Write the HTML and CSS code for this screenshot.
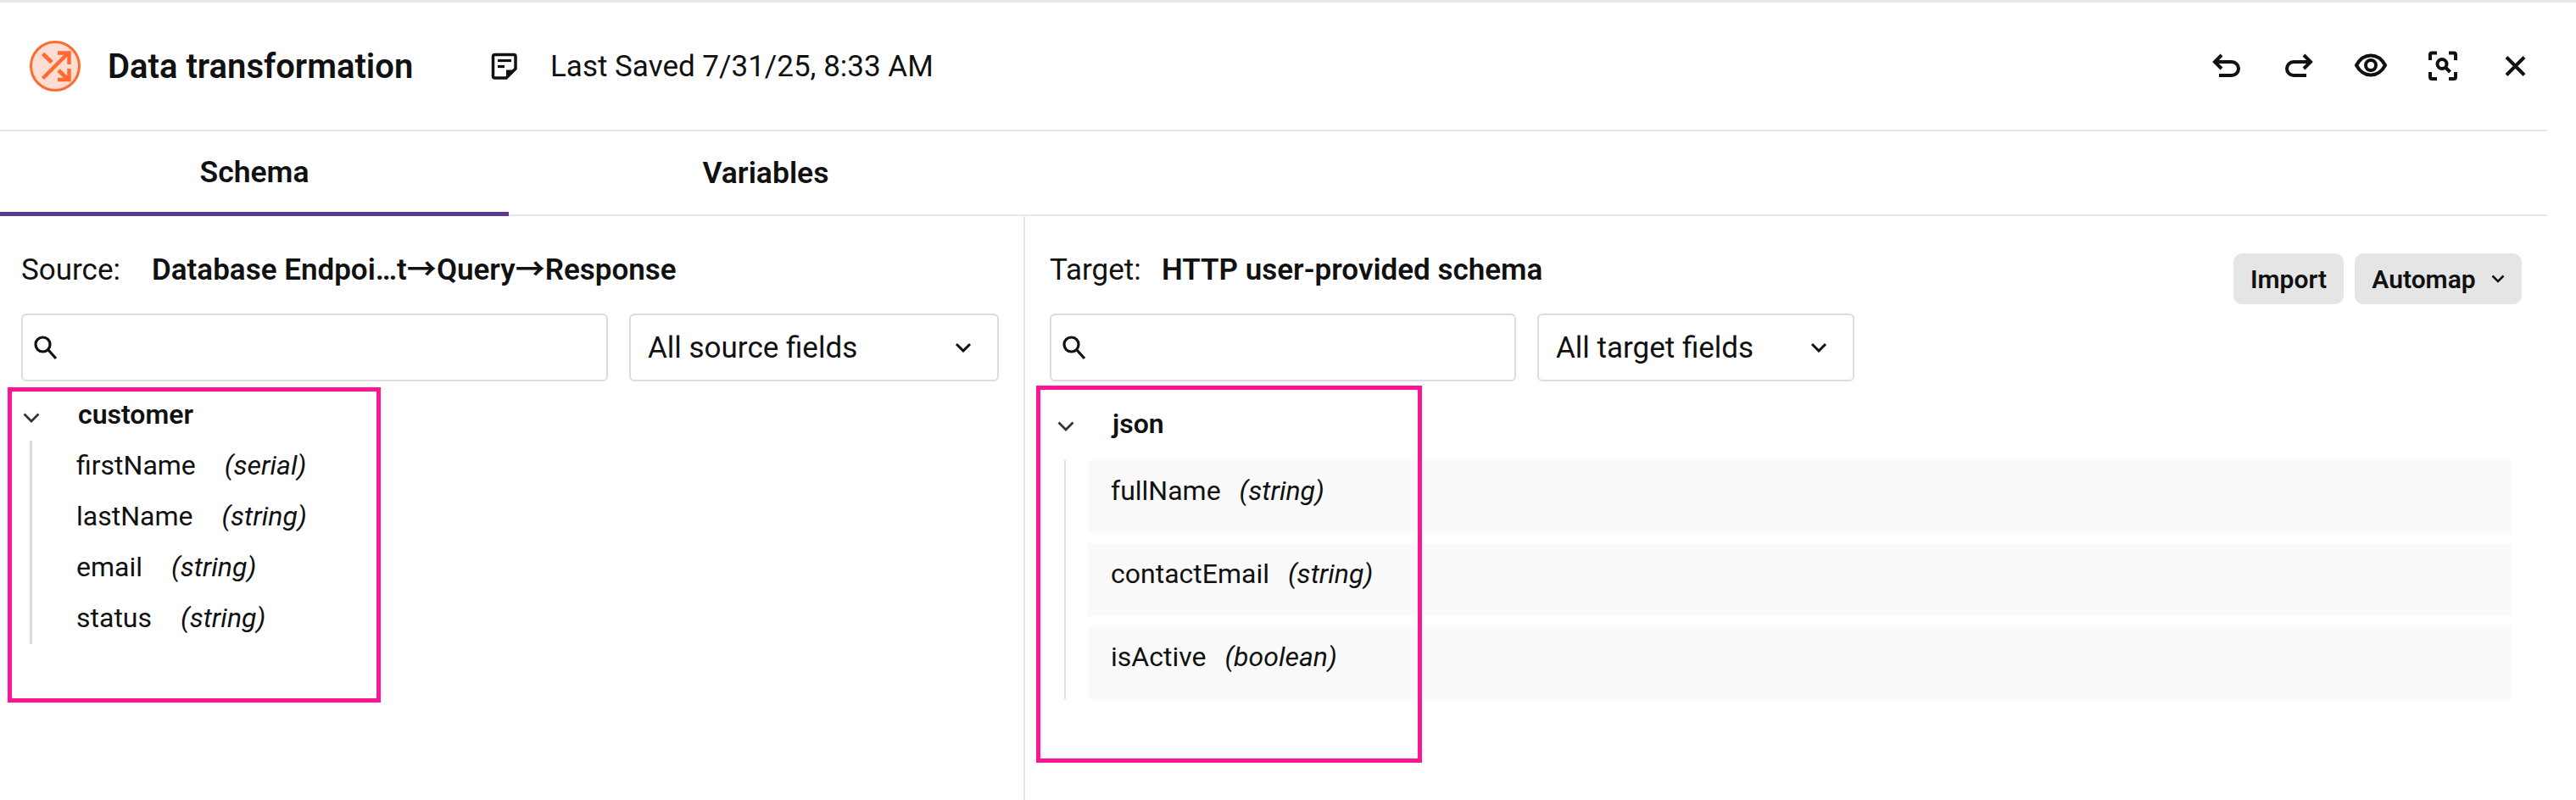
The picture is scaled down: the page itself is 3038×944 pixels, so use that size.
FILE: index.html
```html
<!DOCTYPE html>
<html lang="en">
<head>
<meta charset="utf-8">
<title>Data transformation</title>
<link rel="stylesheet" href="styles.css">
</head>
<body>
<div class="topline"></div>
<div class="app">
  <header class="header">
    <svg class="logo" width="60" height="60" viewBox="0 0 60 60">
      <circle cx="30" cy="30" r="28.5" fill="#ffddd2" stroke="#ff6a2e" stroke-width="3"/>
      <g fill="none" stroke="#ff6a2e" stroke-width="4.5">
        <path d="M15.5 15.5 26 25.5"/>
        <path d="M15.5 44.5 45 15"/>
        <path d="M34 35 45 45.5"/>
        <path d="M33 14.5H46.5V28"/>
        <path d="M33 46H46.5V33"/>
      </g>
    </svg>
    <h1 class="title">Data transformation</h1>
    <svg class="note" width="32" height="32" viewBox="0 0 32 32">
      <path d="M4.5 2.5H27a2 2 0 0 1 2 2V19L18 30H4.5a2 2 0 0 1-2-2V4.5a2 2 0 0 1 2-2Z" fill="none" stroke="#111" stroke-width="3.5"/>
      <path d="M8 9.5H24" stroke="#111" stroke-width="3.2"/>
      <path d="M8 16.5H16" stroke="#111" stroke-width="3.2"/>
      <path d="M18 20.5H30L18 31Z" fill="#111"/>
    </svg>
    <span class="saved">Last Saved 7/31/25, 8:33 AM</span>
    <div class="toolbar">
      <svg class="tool" viewBox="0 0 48 48"><path d="M10 18H30a8 8 0 0 1 0 16H15M18 10l-8 8 8 8"/></svg>
      <svg class="tool" viewBox="0 0 48 48"><path d="M38 18H18a8 8 0 0 0 0 16H33M30 10l8 8-8 8"/></svg>
      <svg class="tool" viewBox="0 0 48 48"><path d="M7 22C11 14.500 17 10.500 24 10.500S37 14.500 41 22C37 29.500 31 33.500 24 33.500S11 29.500 7 22Z"/><circle cx="24" cy="22" r="6"/></svg>
      <svg class="tool" viewBox="0 0 48 48"><path d="M9 16V9.500a2 2 0 0 1 2-2h6M31 7.500h6a2 2 0 0 1 2 2V16M39 30v6a2 2 0 0 1-2 2h-6M17 38h-6a2 2 0 0 1-2-2v-6"/><circle cx="23" cy="20.500" r="5.500"/><path d="M27 24.500l5.500 5.500"/></svg>
      <svg class="tool" viewBox="0 0 48 48"><path d="M14 12.500 35 33.500M35 12.500 14 33.500"/></svg>
    </div>
  </header>
  <nav class="tabs">
    <div class="tab tab-active">Schema</div>
    <div class="tab">Variables</div>
  </nav>
  <main class="body">
    <section class="pane pane-source">
      <div class="heading">
        <span class="label label-source">Source:</span>
        <strong class="path">Database Endpoi…t<span class="arrow">→</span>Query<span class="arrow">→</span>Response</strong>
      </div>
      <div class="controls">
        <div class="search search-source">
          <svg class="search-icon" width="30" height="30" viewBox="0 0 30 30"><circle cx="11.500" cy="11.500" r="8.500"/><path d="M18 18 27 28"/></svg>
        </div>
        <div class="select select-source">
          <span>All source fields</span>
          <svg class="chev" width="20" height="12" viewBox="0 0 20 12"><path d="M2 2l8 8 8-8"/></svg>
        </div>
      </div>
      <div class="tree">
        <div class="tree-head">
          <svg class="tree-chev" width="20" height="12" viewBox="0 0 20 12"><path d="M1.500 1.500 10 10l8.500-8.500"/></svg>
          <span class="tree-name">customer</span>
        </div>
        <ul class="fields">
          <li class="field"><span class="fname">firstName</span><em class="ftype">(serial)</em></li>
          <li class="field"><span class="fname">lastName</span><em class="ftype">(string)</em></li>
          <li class="field"><span class="fname">email</span><em class="ftype">(string)</em></li>
          <li class="field"><span class="fname">status</span><em class="ftype">(string)</em></li>
        </ul>
      </div>
    </section>
    <section class="pane pane-target">
      <div class="heading">
        <span class="label label-target">Target:</span>
        <strong class="path">HTTP user-provided schema</strong>
        <div class="actions">
          <button class="btn btn-import">Import</button>
          <button class="btn btn-auto">Automap
            <svg class="btn-chev" width="16" height="10" viewBox="0 0 16 10"><path d="M1.500 1.500 8 8l6.500-6.500"/></svg>
          </button>
        </div>
      </div>
      <div class="controls">
        <div class="search search-target">
          <svg class="search-icon" width="30" height="30" viewBox="0 0 30 30"><circle cx="11.500" cy="11.500" r="8.500"/><path d="M18 18 27 28"/></svg>
        </div>
        <div class="select select-target">
          <span>All target fields</span>
          <svg class="chev" width="20" height="12" viewBox="0 0 20 12"><path d="M2 2l8 8 8-8"/></svg>
        </div>
      </div>
      <div class="tree">
        <div class="tree-head tree-head-target">
          <svg class="tree-chev" width="20" height="12" viewBox="0 0 20 12"><path d="M1.500 1.500 10 10l8.500-8.500"/></svg>
          <span class="tree-name">json</span>
        </div>
        <ul class="fields fields-target">
          <li class="field field-target"><span class="fname">fullName</span><em class="ftype">(string)</em></li>
          <li class="field field-target"><span class="fname">contactEmail</span><em class="ftype">(string)</em></li>
          <li class="field field-target"><span class="fname">isActive</span><em class="ftype">(boolean)</em></li>
        </ul>
      </div>
    </section>
  </main>
</div>
<div class="mark mark-source"></div>
<div class="mark mark-target"></div>
</body>
</html>
```
FILE: styles.css
```css
* { box-sizing: border-box; }
html, body { margin: 0; padding: 0; background: #fff; }
body {
  position: relative;
  height: 944px;
  overflow: hidden;
  font-family: Roboto, "Liberation Sans", sans-serif;
  color: #111;
}
.topline { height: 3px; background: #e5e7eb; }
.app { width: 3004px; }

.header {
  height: 152px;
  border-bottom: 2px solid #e6e6e6;
  display: flex;
  align-items: center;
  padding-left: 35px;
}
.logo { flex: none; }
.title { margin: 0 0 0 32px; font-size: 40px; font-weight: 600; width: 452px; }
.note { flex: none; }
.saved { margin-left: 38px; font-size: 35px; }
.toolbar { margin-left: auto; margin-right: 14px; display: flex; gap: 37px; padding-top: 2px; }
.tool {
  width: 48px;
  height: 48px;
  fill: none;
  stroke: #111;
  stroke-width: 4;
}

.tabs { height: 100px; display: flex; gap: 3px; border-bottom: 2px solid #e6e6e6; }
.tab {
  width: 600px;
  height: 100px;
  display: flex;
  align-items: center;
  justify-content: center;
  padding-bottom: 2px;
  font-size: 35.500px;
  font-weight: 600;
}
.tab-active { border-bottom: 5px solid #5c3a92; padding-bottom: 0; }

.body { display: flex; height: 689px; }
.pane { padding-top: 33px; }
.pane-source { width: 1209px; padding-left: 25px; border-right: 2px solid #e6e6e6; }
.pane-target { flex: 1; padding-left: 29px; padding-right: 30px; }

.heading { height: 60px; display: flex; align-items: center; font-size: 35px; margin-bottom: 22px; }
.label-source { width: 154px; }
.label-target { width: 132px; }
.path { font-weight: 600; }
.arrow { font-family: "Noto Sans CJK JP", sans-serif; font-weight: 700; line-height: 0; }
.actions { margin-left: auto; display: flex; gap: 13px; align-self: flex-start; margin-top: 11px; }
.btn {
  height: 60px;
  border: 0;
  border-radius: 10px;
  background: #e5e5e5;
  font: 600 30px Roboto, sans-serif;
  color: #111;
  display: flex;
  align-items: center;
  justify-content: center;
}
.btn-import { width: 130px; }
.btn-auto { width: 197px; gap: 18px; }
.btn-chev { fill: none; stroke: #111; stroke-width: 2.500; }

.controls { display: flex; gap: 25px; height: 80px; }
.search, .select {
  height: 80px;
  border: 2px solid #dcdcdc;
  border-radius: 6px;
  display: flex;
  align-items: center;
}
.search { padding-left: 12px; }
.search-source { width: 692px; }
.search-target { width: 550px; }
.search-icon { fill: none; stroke: #111; stroke-width: 3.200; }
.select { font-size: 35px; padding: 0 30px 0 20px; justify-content: space-between; }
.select-source { width: 436px; }
.select-target { width: 374px; }
.chev { fill: none; stroke: #111; stroke-width: 3; }

.tree { margin-top: 10px; }
.tree-head { height: 60px; display: flex; align-items: center; padding: 0 0 2px 2px; }
.tree-head-target { height: 83px; padding-left: 9px; padding-bottom: 4px; }
.tree-chev { fill: none; stroke: #333; stroke-width: 2.800; margin-top: 7px; }
.tree-name { margin-left: 45px; font-size: 32px; font-weight: 600; }

.fields {
  list-style: none;
  margin: 0 0 0 10px;
  padding: 0 0 0 52px;
  border-left: 3px solid #dcdcdc;
}
.field { height: 60px; display: flex; align-items: center; font-size: 32px; padding-bottom: 3px; }
.fname { margin-right: 34px; }
.ftype { font-style: italic; }

.fields-target {
  margin-left: 17px;
  padding-left: 26px;
  border-left-width: 2px;
  margin-right: 12px;
  display: flex;
  flex-direction: column;
  gap: 12px;
}
.field-target {
  height: 86px;
  background: #fafafa;
  padding: 12px 0 0 27px;
  align-items: flex-start;
  line-height: 48px;
}
.field-target .fname { margin-right: 22px; }

.mark { position: absolute; border: 5px solid #ff1493; }
.mark-source { left: 9px; top: 457px; width: 440px; height: 372px; }
.mark-target { left: 1222px; top: 455px; width: 455px; height: 445px; }
```
